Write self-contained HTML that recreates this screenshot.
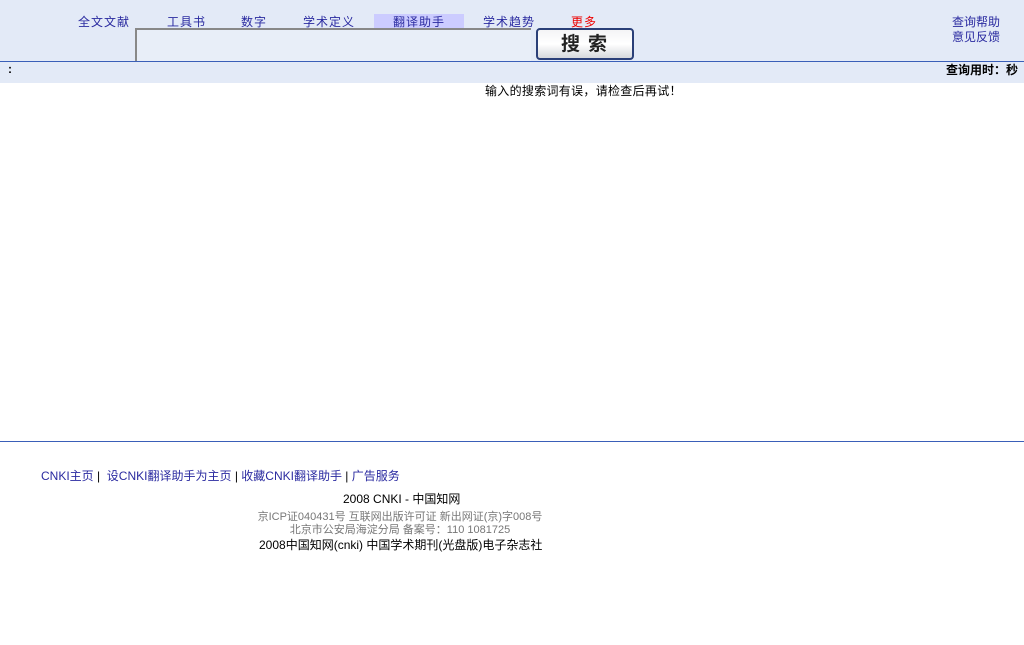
<!DOCTYPE html>
<html><head><meta charset="utf-8"><style>
body{margin:0;width:1024px;height:645px;background:#fff;font-family:"Liberation Sans","Noto Sans CJK SC",sans-serif;position:relative;overflow:hidden}
.a{position:absolute;white-space:nowrap}
.top{position:absolute;left:0;top:0;width:1024px;height:61px;background:#e3eaf7;border-bottom:1px solid #3a5fb8}
.bar2{position:absolute;left:0;top:62px;width:1024px;height:21px;background:#e3eaf7}
.nav{font-size:12px;color:#2a2aa0;top:13px;letter-spacing:1px}
.blue{color:#2a2aa0}
</style></head><body>
<div class="top"></div>
<div class="bar2"></div>
<div class="a nav" style="left:78px">全文文献</div>
<div class="a nav" style="left:167px">工具书</div>
<div class="a nav" style="left:241px">数字</div>
<div class="a" style="left:374px;top:14px;width:90px;height:14px;background:#ccccff"></div>
<div class="a nav" style="left:303px">学术定义</div>
<div class="a nav" style="left:393px">翻译助手</div>
<div class="a nav" style="left:483px">学术趋势</div>
<div class="a nav" style="left:571px;color:#e00">更多</div>
<div class="a" style="left:135px;top:28px;width:396px;height:33px;background:#e8eef8;border-top:2px solid #888;border-left:2px solid #888;box-sizing:border-box"></div>
<div class="a" style="left:536px;top:28px;width:98px;height:32px;box-sizing:border-box;border:2px solid #2a3f78;border-radius:4px;background:linear-gradient(#f4f4f6,#fff 50%,#d6d8dc);font-size:19px;font-weight:bold;color:#222;text-align:center;line-height:29px;letter-spacing:8px;padding-left:6px">搜索</div>
<div class="a blue" style="left:952px;top:15px;font-size:12px;line-height:15px">查询帮助<br>意见反馈</div>
<div class="a" style="left:8px;top:62px;font-size:12px;font-weight:bold">:</div>
<div class="a" style="left:946px;top:61px;font-size:12px;font-weight:bold">查询用时：秒</div>
<div class="a" style="left:485px;top:82px;font-size:12px;letter-spacing:0.3px">输入的搜索词有误，请检查后再试！</div>
<div class="a" style="left:0;top:441px;width:1024px;height:1px;background:#3a5fb8"></div>
<div class="a" style="left:41px;top:467px;font-size:12px;color:#2a2aa0">CNKI主页 <span style="color:#000">|</span>&nbsp; 设CNKI翻译助手为主页 <span style="color:#000">|</span> 收藏CNKI翻译助手 <span style="color:#000">|</span> 广告服务</div>
<div class="a" style="left:343px;top:490px;font-size:12px">2008 CNKI - 中国知网</div>
<div class="a" style="left:0;top:511px;width:800px;text-align:center;font-size:11px;color:#777;line-height:13px">京ICP证040431号 互联网出版许可证 新出网证(京)字008号<br>北京市公安局海淀分局 备案号：110 1081725</div>
<div class="a" style="left:259px;top:536px;font-size:12px">2008中国知网(cnki) 中国学术期刊(光盘版)电子杂志社</div>
</body></html>
